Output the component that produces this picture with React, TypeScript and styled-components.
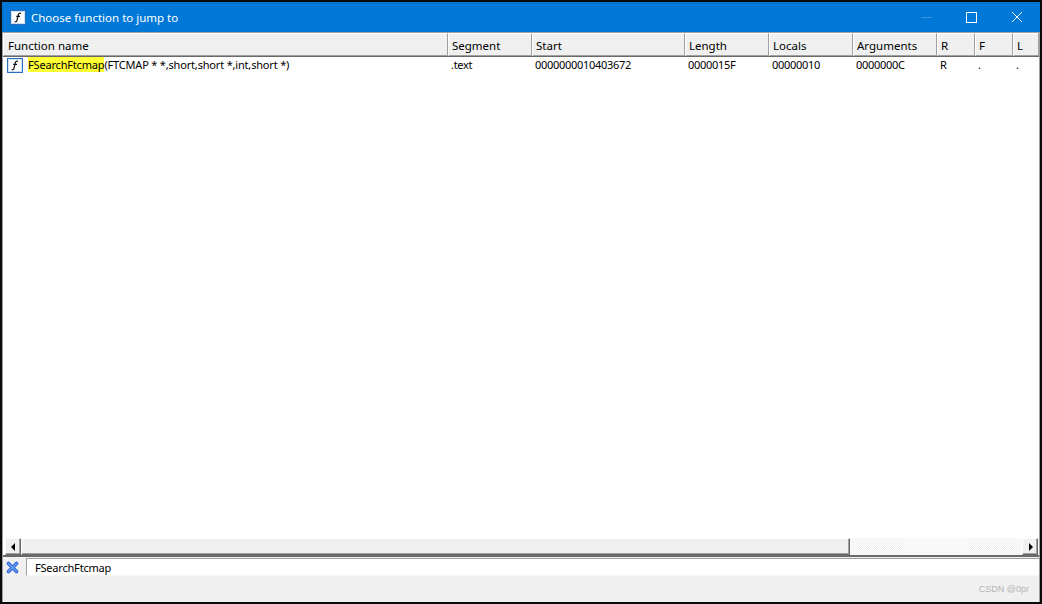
import React from "react";
import styled, { createGlobalStyle } from "styled-components";

const columns = [
  { name: "Function name", width: 445 },
  { name: "Segment", width: 84 },
  { name: "Start", width: 153 },
  { name: "Length", width: 84 },
  { name: "Locals", width: 84 },
  { name: "Arguments", width: 84 },
  { name: "R", width: 38 },
  { name: "F", width: 38 },
  { name: "L", width: 26 },
];

const rowCells = [".text", "0000000010403672", "0000015F", "00000010", "0000000C", "R", ".", "."];

const GlobalStyle = createGlobalStyle`
  html, body {
    margin: 0;
    padding: 0;
    background: #000;
  }
`;

const Win = styled.div`
  width: 1042px;
  height: 604px;
  box-sizing: border-box;
  border: 2px solid #0a0a0a;
  display: flex;
  flex-direction: column;
  overflow: hidden;
  background: #f0f0f0;
  font-family: "Noto Sans", "Open Sans", sans-serif;
  color: #000;
`;

const TitleBar = styled.div`
  height: 30px;
  flex: none;
  background: #0078d7;
  display: flex;
  align-items: center;
  padding-left: 8px;
  padding-right: 1px;
  color: #fff;
  font-size: 11.5px;
`;

const TitleText = styled.span`
  margin-left: 5px;
  flex: 1;
`;

const WinButton = styled.div`
  width: 45px;
  height: 30px;
  display: flex;
  align-items: center;
  justify-content: center;
`;

const Content = styled.div`
  flex: 1;
  min-height: 0;
  display: flex;
  flex-direction: column;
  border-top: 1px solid #a0a0a0;
  border-left: 1px solid #a0a0a0;
  border-right: 1px solid #a0a0a0;
`;

const HeaderRow = styled.div`
  height: 23px;
  flex: none;
  display: flex;
  background: #f0f0f0;
  border-bottom: 1px solid #696969;
`;

const HeaderCell = styled.div<{ $w: number; $first?: boolean }>`
  width: ${(p) => p.$w}px;
  flex: none;
  box-sizing: border-box;
  padding-left: ${(p) => (p.$first ? 4 : 3)}px;
  font-size: 11.5px;
  line-height: 23px;
  border-top: 1px solid #fff;
  border-left: 1px solid #fff;
  border-right: 1px solid #a0a0a0;
  border-bottom: 1px solid #a0a0a0;
  white-space: nowrap;
  overflow: hidden;
`;

const List = styled.div`
  flex: 1;
  min-height: 0;
  background: #fff;
`;

const Row = styled.div`
  display: flex;
  height: 16px;
  align-items: center;
  font-size: 11px;
  letter-spacing: -0.18px;
  white-space: nowrap;
`;

const NameCell = styled.div`
  width: 445px;
  flex: none;
  display: flex;
  align-items: center;
  padding-left: 4px;
  box-sizing: border-box;
`;

const FuncText = styled.span`
  margin-left: 5px;
  margin-top: -1px;
`;

const Match = styled.span`
  background: #ffff33;
`;

const DataCell = styled.div<{ $w: number }>`
  width: ${(p) => p.$w}px;
  flex: none;
  box-sizing: border-box;
  padding-left: 3px;
  margin-top: -1px;
  letter-spacing: -0.3px;
`;

const ScrollBar = styled.div`
  height: 17px;
  flex: none;
  display: flex;
  padding: 0 1px 0 2px;
  background: #fff;
`;

const ArrowBtn = styled.div`
  width: 16px;
  flex: none;
  background: #f0f0f0;
  box-sizing: border-box;
  border: 1px solid;
  border-color: #fff #696969 #696969 #fff;
  box-shadow: inset -1px -1px 0 #a0a0a0;
  display: flex;
  align-items: center;
  justify-content: center;
`;

const Thumb = styled.div`
  width: 829px;
  flex: none;
  box-sizing: border-box;
  background: #f0f0f0;
  border: 1px solid;
  border-color: #fff #696969 #696969 #fff;
  box-shadow: inset -1px -1px 0 #a0a0a0;
`;

const Track = styled.div`
  flex: 1;
  background-image: repeating-conic-gradient(#f0f0f0 0 25%, #fff 0 50%);
  background-size: 2px 2px;
`;

const TrackGlare = styled.div`
  width: 62px;
  height: 100%;
  margin-left: 54px;
  background: #f9f9f9;
`;

const FilterBar = styled.div`
  height: 21px;
  flex: none;
  display: flex;
  align-items: flex-end;
  background: #f0f0f0;
  border-top: 2px solid #696969;
  box-sizing: border-box;
`;

const FilterIcon = styled.div`
  width: 23px;
  height: 18px;
  flex: none;
  display: flex;
  align-items: center;
  justify-content: center;
  padding-right: 5px;
  box-sizing: border-box;
`;

const FilterInput = styled.div`
  flex: 1;
  height: 18px;
  box-sizing: border-box;
  background: #fff;
  border-left: 1px solid #a0a0a0;
  border-top: 1px solid #a0a0a0;
  border-bottom: 1px solid #f8f8f8;
  padding-left: 8px;
  font-size: 11px;
  letter-spacing: -0.2px;
  line-height: 17px;
`;

const StatusBar = styled.div`
  height: 26px;
  flex: none;
  display: flex;
  justify-content: flex-end;
  align-items: center;
  padding-right: 10px;
  font-family: "Liberation Sans", sans-serif;
  font-size: 9px;
  color: #b4b4b4;
`;

const FuncIcon = () => (
  <svg width="16" height="15" viewBox="0 0 16 15">
    <rect x="0.5" y="0.5" width="15" height="14" fill="#fff" stroke="#2a6fc0" />
    <rect x="1.5" y="1.5" width="13" height="12" fill="#fff" stroke="#cfe0f4" />
    <path
      d="M11 3.6c-1-.7-2.2-.4-2.6.9L6.900 10.600c-.3 1.200-1.200 1.500-2.200.9M6.200 6.300h3.800"
      fill="none"
      stroke="#111"
      strokeWidth="1.2"
    />
  </svg>
);

const App = () => {
  return (
    <>
      <GlobalStyle />
      <Win>
        <TitleBar>
          <FuncIcon />
          <TitleText>Choose function to jump to</TitleText>
          <WinButton>
            <svg width="11" height="11" viewBox="0 0 11 11">
              <path d="M0 5.5h11" stroke="#3f93dc" />
            </svg>
          </WinButton>
          <WinButton>
            <svg width="11" height="11" viewBox="0 0 11 11">
              <rect x="0.5" y="0.5" width="10" height="10" fill="none" stroke="#fff" />
            </svg>
          </WinButton>
          <WinButton>
            <svg width="12" height="12" viewBox="0 0 12 12">
              <path d="M1 1l10 10M11 1L1 11" stroke="#fff" />
            </svg>
          </WinButton>
        </TitleBar>
        <Content>
          <HeaderRow>
            {columns.map((c, i) => (
              <HeaderCell key={c.name} $w={c.width} $first={i === 0}>
                {c.name}
              </HeaderCell>
            ))}
          </HeaderRow>
          <List>
            <Row>
              <NameCell>
                <FuncIcon />
                <FuncText>
                  <Match>FSearchFtcmap</Match>(FTCMAP * *,short,short *,int,short *)
                </FuncText>
              </NameCell>
              {rowCells.map((v, i) => (
                <DataCell key={i} $w={columns[i + 1].width}>
                  {v}
                </DataCell>
              ))}
            </Row>
          </List>
          <ScrollBar>
            <ArrowBtn>
              <svg width="5" height="8" viewBox="0 0 5 8">
                <path d="M4 0v8L0 4z" fill="#000" />
              </svg>
            </ArrowBtn>
            <Thumb />
            <Track>
              <TrackGlare />
            </Track>
            <ArrowBtn>
              <svg width="5" height="8" viewBox="0 0 5 8">
                <path d="M1 0v8l4-4z" fill="#000" />
              </svg>
            </ArrowBtn>
          </ScrollBar>
          <FilterBar>
            <FilterIcon>
              <svg width="13" height="13" viewBox="0 0 13 13">
                <path d="M2.500 2.500l8 8M10.500 2.500l-8 8" stroke="#2a62d8" strokeWidth="3.600" strokeLinecap="round" />
                <path d="M2.500 2.500l8 8M10.500 2.500l-8 8" stroke="#6fa2f2" strokeWidth="1.400" strokeLinecap="round" />
              </svg>
            </FilterIcon>
            <FilterInput>FSearchFtcmap</FilterInput>
          </FilterBar>
          <StatusBar>CSDN @0pr</StatusBar>
        </Content>
      </Win>
    </>
  );
};

export default App;
